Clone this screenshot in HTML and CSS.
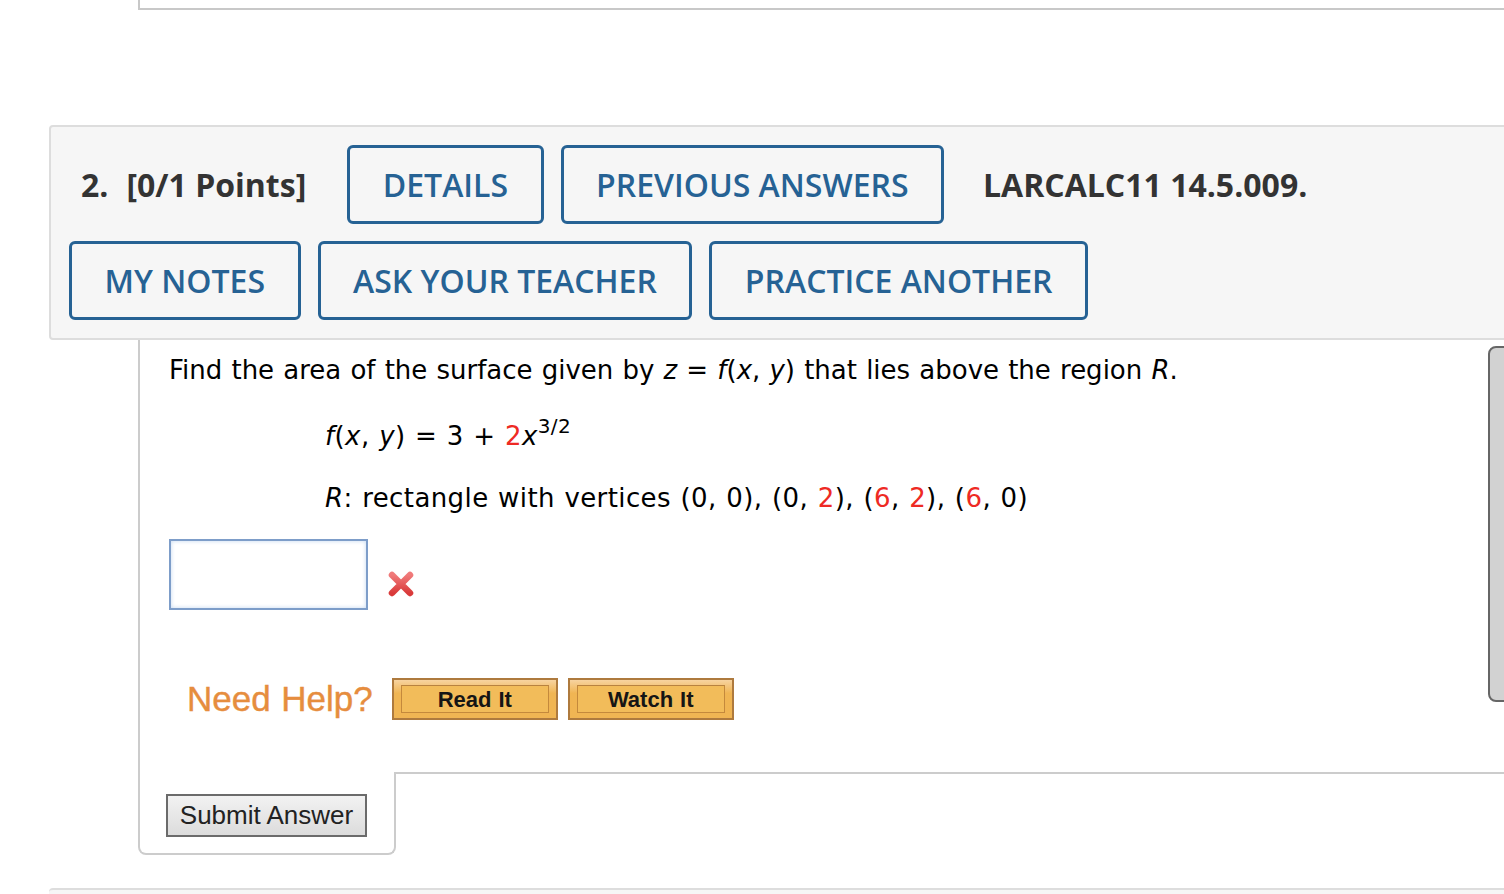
FILE: index.html
```html
<!DOCTYPE html>
<html>
<head>
<meta charset="utf-8">
<link rel="stylesheet" href="styles.css">
</head>
<body>
<div class="page">
  <div class="prev-question"></div>

  <div class="question">
    <div class="qheader">
      <div class="hrow">
        <span class="qnum">2.</span>
        <span class="qpoints">[0/1 Points]</span>
        <a class="qbtn">DETAILS</a>
        <a class="qbtn">PREVIOUS ANSWERS</a>
        <span class="qref">LARCALC11 14.5.009.</span>
      </div>
      <div class="hrow row2">
        <a class="qbtn">MY NOTES</a>
        <a class="qbtn">ASK YOUR TEACHER</a>
        <a class="qbtn">PRACTICE ANOTHER</a>
      </div>
    </div>

    <div class="qbody">
      <div class="qcontent">
        <p class="line first">Find the area of the surface given by <i>z</i> = <i>f</i>(<i>x</i>, <i>y</i>) that lies above the region <i>R</i>.</p>
        <p class="line indent eq"><i>f</i>(<i>x</i>, <i>y</i>) = 3 + <span class="red">2</span><i>x</i><sup class="sup">3/2</sup></p>
        <p class="line indent rect"><i>R</i>: rectangle with vertices (0, 0), (0, <span class="red">2</span>), (<span class="red">6</span>, <span class="red">2</span>), (<span class="red">6</span>, 0)</p>

        <div class="answer-row">
          <div class="answer-input"></div>
          <svg class="wrong" width="28" height="28" viewBox="0 0 28 28">
            <defs>
              <linearGradient id="xg" x1="0" y1="0" x2="0" y2="1">
                <stop offset="0" stop-color="#f07a7a"/>
                <stop offset="1" stop-color="#d93a3a"/>
              </linearGradient>
            </defs>
            <path d="M5 5 L23 23 M23 5 L5 23" stroke="url(#xg)" stroke-width="6.5" stroke-linecap="round"/>
          </svg>
        </div>

        <div class="help-row">
          <span class="need-help">Need Help?</span>
          <span class="help-btn"><span class="help-inner">Read It</span></span>
          <span class="help-btn"><span class="help-inner">Watch It</span></span>
        </div>
      </div>
      <div class="side-tab"></div>
    </div>

    <div class="qfooter">
      <div class="submit-area">
        <span class="submit-btn">Submit Answer</span>
      </div>
      <div class="footer-fill"></div>
    </div>
  </div>

  <div class="next-question"></div>
</div>
</body>
</html>
```

FILE: styles.css
```css
html, body {
  margin: 0;
  padding: 0;
  background: #ffffff;
  overflow: hidden;
}

.page {
  width: 1504px;
  height: 894px;
  overflow: hidden;
}

.prev-question {
  margin-left: 138px;
  height: 8px;
  border-left: 2px solid #c8c8c8;
  border-bottom: 2px solid #c8c8c8;
  margin-right: -20px;
}

.question {
  margin-top: 115px;
  margin-left: 49px;
  margin-right: -20px;
}

.qheader {
  background: #f6f6f6;
  border: 2px solid #dddddd;
  border-radius: 4px;
  padding: 18px;
  box-sizing: border-box;
  height: 215px;
}

.hrow {
  display: flex;
  align-items: center;
  gap: 17px;
  font-family: "Open Sans", sans-serif;
}

.row2 {
  margin-top: 17px;
}

.qnum {
  font-weight: 700;
  font-size: 32px;
  color: #333333;
  margin-left: 12px;
  margin-right: 1px;
}

.qpoints {
  font-weight: 700;
  font-size: 32px;
  color: #333333;
  margin-right: 24px;
}

.qref {
  font-weight: 700;
  font-size: 32px;
  color: #333333;
  margin-left: 22px;
}

.qbtn {
  display: inline-block;
  box-sizing: border-box;
  height: 79px;
  line-height: 73px;
  padding: 0 32.5px;
  border: 3px solid #266294;
  border-radius: 6px;
  color: #266294;
  font-weight: 600;
  font-size: 32px;
  white-space: nowrap;
}

.qbody {
  margin-left: 89px;
  border-left: 2px solid #cccccc;
  display: flex;
  height: 432px;
}

.qcontent {
  flex: 1;
  padding: 15px 0 0 29px;
  font-family: "DejaVu Sans", Verdana, sans-serif;
  font-size: 26px;
  word-spacing: 0.9px;
  color: #000000;
}

.line {
  margin: 0;
  line-height: 30px;
  white-space: nowrap;
}

.indent {
  margin-left: 156px;
}

.eq {
  margin-top: 36px;
  letter-spacing: 0.4px;
}

.rect {
  margin-top: 32px;
  letter-spacing: 0.4px;
}

.red {
  color: #ee2a24;
}

.sup {
  font-size: 20px;
  vertical-align: 12px;
  line-height: 0;
  letter-spacing: 0.3px;
}

.answer-row {
  margin-top: 26px;
  display: flex;
  align-items: flex-end;
  gap: 20px;
}

.answer-input {
  width: 199px;
  height: 71px;
  box-sizing: border-box;
  border: 2px solid #7d9dc9;
  box-shadow: inset 0 0 4px #c4d8f0;
  background: #ffffff;
}

.wrong {
  margin-bottom: 12px;
  margin-left: -1px;
}

.help-row {
  margin-top: 68px;
  margin-left: 18px;
  display: flex;
  align-items: center;
  gap: 10px;
}

.need-help {
  font-family: "Liberation Sans", Arial, sans-serif;
  font-size: 35px;
  color: #e68d3e;
  margin-right: 9px;
  -webkit-text-stroke: 0.4px #e68d3e;
}

.help-btn {
  display: inline-block;
  box-sizing: border-box;
  width: 166px;
  height: 42px;
  border: 2px solid #ae7a3e;
  background: linear-gradient(#f7d3a0, #f0b553 35%, #f0b553);
  padding: 5px 7px 5px 7px;
}

.help-inner {
  display: block;
  height: 100%;
  box-sizing: border-box;
  border: 1px solid #c4893c;
  border-top-color: #b88240;
  background: #f2bc5a;
  font-family: "Liberation Sans", Arial, sans-serif;
  font-weight: 700;
  font-size: 22px;
  line-height: 28px;
  text-align: center;
  color: #151515;
}

.side-tab {
  width: 40px;
  margin-top: 6px;
  height: 356px;
  box-sizing: border-box;
  background: #d2d2d2;
  border: 2px solid #666666;
  border-radius: 8px 0 0 8px;
  margin-right: -4px;
}

.qfooter {
  margin-left: 89px;
  display: flex;
}

.submit-area {
  width: 258px;
  height: 83px;
  box-sizing: border-box;
  border: 2px solid #cccccc;
  border-top: none;
  border-radius: 0 0 8px 8px;
  padding: 22px 0 0 26px;
}

.footer-fill {
  flex: 1;
  border-top: 2px solid #cccccc;
  margin-left: -2px;
}

.submit-btn {
  display: inline-block;
  box-sizing: border-box;
  width: 201px;
  height: 43px;
  border: 2px solid #6b6b6b;
  background: linear-gradient(#f2f2f2, #dcdcdc);
  font-family: "Liberation Sans", Arial, sans-serif;
  font-size: 26px;
  line-height: 39px;
  text-align: center;
  color: #222222;
}

.next-question {
  margin-top: 33px;
  margin-left: 49px;
  margin-right: -20px;
  height: 40px;
  border-top: 2px solid #dddddd;
  background: #f6f6f6;
  border-radius: 4px 0 0 0;
}
```
